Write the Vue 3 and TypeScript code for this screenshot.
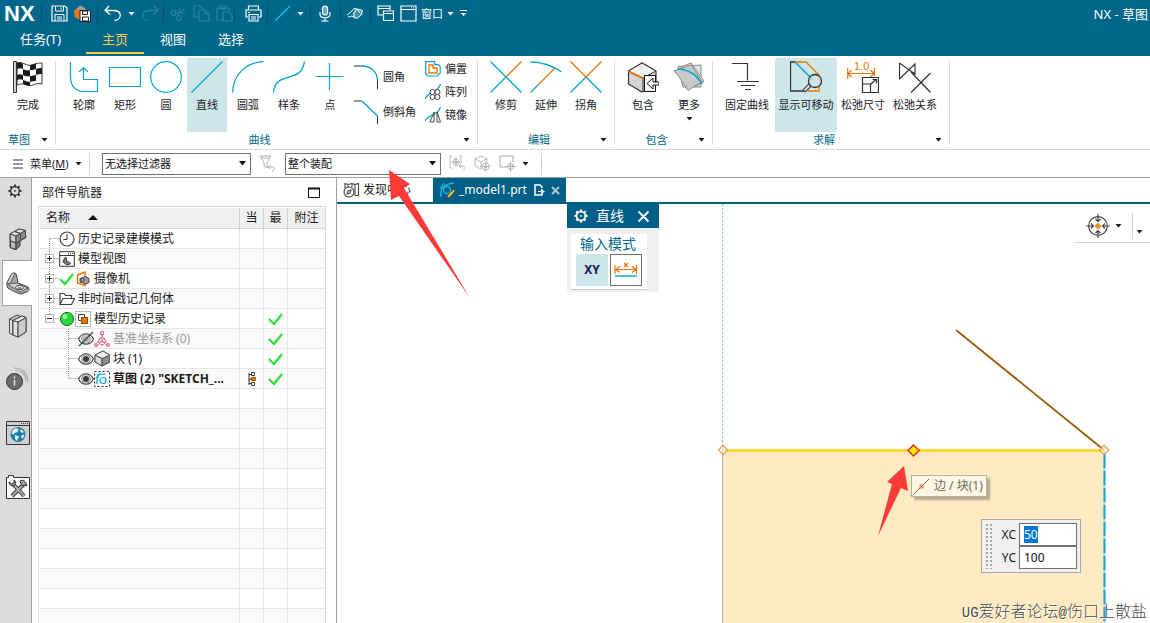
<script setup lang="ts">
import { h, onMounted, ref } from 'vue'

const check = '<path d="M1 8l5 5L14 3" fill="none" stroke="#2be03a" stroke-width="2.2"/>'
const eye = '<path d="M0.500 8C4 1 12 1 15.500 8 12 15 4 15 0.500 8z" fill="#fff" stroke="#444" stroke-width="1.200"/><circle cx="8" cy="8" r="4.200" fill="none" stroke="#555" stroke-width=".8"/><circle cx="8" cy="8" r="3" fill="#3a3a3a"/>'
const cube = (s: string) => `<path d="M1 5l8-4 7 4v7l-8 4-7-4z" fill="#bbb" stroke="${s}"/><path d="M1 5l7 3.500V16l-7-4z" fill="#d8d8d8" stroke="${s}"/><path d="M8 8.500L16 5v7l-8 4z" fill="#8c8c8c" stroke="${s}"/><path d="M1 5l8-4 7 4-8 3.500z" fill="#f2f2f2" stroke="${s}"/>`
const gear = (s: string, w: number) => `<g fill="none" stroke="${s}" stroke-width="${w}"><circle cx="8" cy="8" r="5"/><path stroke-width="${w + 0.6}" d="M8 .5v2.500M8 13v2.500M.5 8H3M13 8h2.500M2.700 2.700l1.700 1.700M11.600 11.600l1.700 1.700M2.700 13.300l1.700-1.700M11.600 4.400l1.700-1.700"/></g><circle cx="8" cy="8" r="1" fill="${s}"/>`
const dots = 'stroke="#8c8c8c" stroke-dasharray="1 1" fill="none"'
const box = '<rect x="5.500" y="5.500" width="8" height="8" fill="#fff" stroke="#b4b4b4"/><path d="M7 9.500h5" stroke="#222"/>'

const art: Record<string, [number, number, string]> = {
  caret: [7, 4, '<path d="M.5 0h6L3.500 3.500z" fill="currentColor"/>'],
  bigCaret: [9, 5, '<path d="M1 0h7L4.500 4.500z" fill="#111"/>'],
  sortUp: [10, 5, '<path d="M0 5h10L5 0z" fill="#111"/>'],
  save: [17, 17, '<path d="M1 1h13l2 2v13H1z" fill="none" stroke="#fff" stroke-width="1.200"/><path d="M4.500 1v5h8V1M4 16V9.500h9V16M6 12h5M6 14h5M10 2.500v2" fill="none" stroke="#fff"/>'],
  saveAs: [17, 17, '<path d="M0 6l6-5.500 5 2.500 1 4-6 8-5-3z" fill="#a89f9a"/><path d="M0 7l4-3 3 2-1 8-5-2z" fill="#e8731c"/><path d="M6 5.500h9l1.500 1.500v9.500H6z" fill="#fff" stroke="#222"/><path d="M8.500 6v3.500h5V6zM8.500 16v-4h6v4z" fill="#fff" stroke="#222"/>'],
  undo: [18, 17, '<path d="M5 1L1 5.500l5 4M1.500 5.500H9c10 0 9 9 1.500 10" fill="none" stroke="#fff" stroke-width="1.300"/>'],
  redo: [18, 17, '<path d="M13 1l4 4.500-5 4M16.500 5.500H9C-1 5.500 0 14.500 7.500 15.500" fill="none" stroke="#2b83a3" stroke-width="1.300"/>'],
  cut: [17, 17, '<g fill="none" stroke="#2b83a3" stroke-width="1.200"><circle cx="3.500" cy="8" r="2.500"/><circle cx="9" cy="13" r="2.500"/><path d="M5.500 8h10M8 11l2-9M9.500 8L14 4"/></g>'],
  copy: [17, 17, '<g fill="none" stroke="#2b83a3" stroke-width="1.200"><path d="M5 12H1V1h6l3 3v1"/><path d="M6 5h6l4 4v7H6zM12 5v4h4"/></g>'],
  paste: [17, 17, '<g fill="none" stroke="#2b83a3" stroke-width="1.200"><path d="M7 15H1V3h12v3M4 4V1h6v3z"/><path d="M7 7h6l3 3v6H7z"/></g>'],
  print: [17, 17, '<g fill="none" stroke="#fff" stroke-width="1.200"><path d="M3.500 5V1h10v4M3 12H1V5h15v7h-2"/><path d="M4 9.500h9V16H4zM6 12h5M6 14h5M3 7.500h2"/></g>'],
  pen: [17, 17, '<path d="M1 16L16 1" stroke="#19c5f5" stroke-width="1.300"/>'],
  mic: [12, 17, '<g fill="none" stroke="#fff" stroke-width="1.200"><rect x="3.500" y="1" width="5" height="9" rx="2.500" fill="#6fa8bf"/><path d="M1 7v2c0 5 10 5 10 0V7M6 13v3M2.500 16h7"/></g>'],
  touch: [17, 17, '<path d="M5 9l2-4 3-1.500 5 1.500 1 4-5 4H8z" fill="#cfe2ea" fill-opacity=".3"/><g fill="none" stroke="#fff"><path d="M0 10l4-3 3-3.500 3 .5M1 12l4-1 3 2M7 8l3-4 5.500 1.500L14 10l-4 3.500-3-1.500zM10 4l3 4"/></g>'],
  windows: [17, 17, '<g fill="none" stroke="#fff" stroke-width="1.200"><path d="M6 10H1V1h12v4M1 3.500h12"/><path d="M6.500 6h10v9.500h-10zM6.500 8.500h10"/></g>'],
  window: [17, 17, '<path d="M1 1h15v15H1zM1 4.500h15" fill="none" stroke="#fff" stroke-width="1.200"/><path d="M11 2.800h4" stroke="#fff" stroke-dasharray="1 1"/>'],
  overflow: [7, 7, '<path d="M0 .5h7" stroke="#fff"/><path d="M.5 3h6L3.500 6z" fill="#fff"/>'],
  flag: [32, 32, '<path d="M5 2c7-2 9 4 15 2s8-2 10-2v21c-8-2-8 3-14 1-5-2-7-1-11 0z" fill="#fff" stroke="#333"/><path d="M5 2c3-1 5 0 6 1v5c-2-1-4-1-6 0zM18 4c2 0 5-1 6-2v6c-2 1-4 1-6 1zM11 8c2 1 5 2 7 1v6c-3 1-5 0-7-1zM24 8c2-1 4-1 6-1v6c-2 0-4 0-6 1zM5 14c2-1 4-1 6 0v5c-2-1-4-1-6 0zM18 15c3 0 4-1 6-1v6c-2 0-4 0-6 1zM11 19c3 1 5 2 7 2v4c-3 0-5-1-7-2z" fill="#1c1c1c"/><path d="M1.500.5h3v31h-3z" fill="#ccc" stroke="#333"/>'],
  profile: [32, 32, '<path d="M2.500 1v14c0 11 5 15.500 14 15.500h13v-12H15.500V7M11 11l4.500-4.500L20 11" fill="none" stroke="#00a5cf" stroke-width="1.200"/>'],
  rect: [32, 32, '<path d="M.5 6.500h31v19H.5z" fill="none" stroke="#00a5cf" stroke-width="1.200"/>'],
  circle: [32, 32, '<circle cx="16" cy="16" r="15.300" fill="none" stroke="#00a5cf" stroke-width="1.200"/>'],
  line: [32, 32, '<path d="M.5 31.500l31-31" stroke="#00a5cf" stroke-width="1.200"/>'],
  arc: [32, 32, '<path d="M.7 31.500C1 14 14 1 31.500 .7" fill="none" stroke="#00a5cf" stroke-width="1.300"/>'],
  spline: [32, 32, '<path d="M.5 31.500C2 9 28 24 31.500.5" fill="none" stroke="#00a5cf" stroke-width="1.300"/>'],
  point: [32, 32, '<path d="M2 15.500h27M15.500 2v27" stroke="#00a5cf" stroke-width="1.200"/>'],
  fillet: [25, 25, '<path d="M0 1h8M23.500 16v8" stroke="#333" fill="none"/><path d="M8 1c9 0 15.500 6 15.500 15" fill="none" stroke="#00a5cf" stroke-width="1.300"/>'],
  chamfer: [25, 25, '<path d="M0 1h8M23.500 16v8" stroke="#333" fill="none"/><path d="M8 1l15.500 15" stroke="#00a5cf" stroke-width="1.300"/>'],
  offset: [16, 16, '<path d="M.7.7h9v3h3.500l2 2V12l-3 3H3L.7 12.500z" fill="none" stroke="#00a5cf" stroke-width="1.200"/><path d="M4 4h4v3h4v5H4z" fill="#fff" stroke="#ea7600" stroke-width="1.300"/>'],
  pattern: [16, 16, '<path d="M0 15C3 7 13 9 15.500 0" fill="none" stroke="#00a5cf" stroke-width="1.200"/><g fill="#fff" stroke="#444"><circle cx="7.500" cy="8" r="2.500"/><circle cx="12.500" cy="8" r="2.500"/><circle cx="7.500" cy="13" r="2.500"/><circle cx="12.500" cy="13" r="2.500"/></g>'],
  mirror: [16, 16, '<path d="M0 14C3 7 13 9 15.500 0" fill="none" stroke="#00a5cf" stroke-width="1.200"/><path d="M9 5v10H5zM12 5l3.500 10H12z" fill="#fff" stroke="#444"/>'],
  trim: [32, 32, '<path d="M.5.5l31 31M.5 31.500L16 16" stroke="#00a5cf" stroke-width="1.300"/><path d="M16 16L31.500.5" stroke="#ea7600" stroke-width="1.300"/>'],
  extend: [32, 32, '<path d="M.5 1C13 1 23 5 31.500 11M.5 31.500L8 24" fill="none" stroke="#00a5cf" stroke-width="1.300"/><path d="M8 24L25 7" stroke="#ea7600" stroke-width="1.300"/>'],
  corner: [32, 32, '<path d="M16 16L.5 31.500M16 16l15.500 15.500" stroke="#00a5cf" stroke-width="1.300"/><path d="M.5.5L16 16 31.500.5" fill="none" stroke="#ea7600" stroke-width="1.300"/>'],
  include: [32, 32, '<path d="M1.500 10L15 2l14 8v13L15 31 1.500 23z" fill="#d4d4d4" stroke="#333" stroke-width="1.200"/><path d="M1.500 10L16 17l13-7L15 2z" fill="#f0f0f0" stroke="#333"/><path d="M16 17v14" stroke="#333"/><path d="M1.500 10.500L16 17.500" stroke="#ea7600" stroke-width="1.500"/><path d="M17.500 14.500h11v16h-11z" fill="#fff" stroke="#111"/><path d="M32 21v3h-6v4l-6-5.500 6-5.500v4z" fill="#fff" stroke="#111"/>'],
  more: [32, 32, '<path d="M5 5.500L28 4v22H10z" fill="#e2e2e2" stroke="#888"/><path d="M8 6l10-4 13 18-9 6z" fill="#ddd" stroke="#888"/><path d="M1 9.500C8 9 12 5 18 4l12 18c-6 0-10 5-15 7.500C10 22 6 15 1 9.500z" fill="#cacaca" stroke="#888"/><path d="M4.500 8C14 8 24 13 28.500 23" fill="none" stroke="#00a5cf" stroke-width="1.600"/>'],
  fixed: [32, 32, '<path d="M1 2.500h15.500v17M6 20.500h22M10 24.500h14M14 28.500h6" fill="none" stroke="#333" stroke-width="1.200"/>'],
  movable: [32, 32, '<path d="M5 1H.5v29H16M1 1h4" fill="none" stroke="#333" stroke-width="1.300"/><path d="M5 1l18 18" stroke="#00a5cf" stroke-width="1.500"/><path d="M5 1h11l13 13v16H18" fill="none" stroke="#ea7600" stroke-width="1.300"/><path d="M20 24l-6 6" stroke="#333" stroke-width="4"/><path d="M20 24l-5.500 5.500" stroke="#ddd" stroke-width="2"/><circle cx="25" cy="20" r="6.500" fill="#cde6ea" fill-opacity=".8" stroke="#333" stroke-width="1.300"/>'],
  relaxDim: [32, 32, '<path d="M.7 7v11M27.500 7v8M1 12.500h26M4.500 9L1 12.500 4.500 16M23.500 9l3.500 3.500-3.500 3.500" fill="none" stroke="#ea7600" stroke-width="1.200"/><text x="7" y="8.500" font-size="11" font-family="Liberation Sans, sans-serif" fill="#ea7600">1.0</text><path d="M15.500 16.500h16v15h-16zM15.500 23h8v8.500M24 23l5-4.500M25.500 18.500h4v4" fill="#fff" stroke="#333" stroke-width="1.200"/>'],
  relaxRel: [32, 32, '<path d="M.5 2v16L16 3v10L.5 2M12 11l19.500 20.500M12 31.500L31.500 12" fill="none" stroke="#333" stroke-width="1.200"/>'],
  burger: [12, 10, '<path d="M1 1h10M1 5h10M1 9h10" stroke="#333"/>'],
  filter: [17, 17, '<path d="M1 1h11L8 7v6l-3-2V7zM2 3h9" fill="none" stroke="#b0b0b0"/><path d="M11 10l-2 2 2 2M9.500 12h4c3 0 2 4-.5 4" fill="none" stroke="#b0b0b0"/>'],
  pickA: [17, 17, '<g fill="none" stroke="#b8b8b8"><path d="M3 1H1v12h2M10 1h2v7"/><circle cx="7" cy="7" r="3"/><path d="M7 2v10M2 7h10M12 9l-2 2 2 2M10.500 11h3c3 0 2 4 0 4.500"/></g><circle cx="7" cy="7" r="1.500" fill="#b0b0b0"/>'],
  pickB: [17, 17, '<g fill="none" stroke="#b8b8b8"><path d="M1 4l6-3 6 3v4M1 4v7l6 3V7M1 4l6 3 6-3"/><circle cx="11.500" cy="11.500" r="3.500"/><path d="M11.500 6.500v10M6.500 11.500h10"/></g><circle cx="11.500" cy="11.500" r="1.500" fill="#b0b0b0"/>'],
  pickC: [17, 17, '<g fill="none" stroke="#aaa"><path d="M7 12H1V1h13v6"/><circle cx="11.500" cy="11.500" r="3"/><path d="M11.500 6.500v10M6.500 11.500h10"/></g>'],
  gearDark: [14, 14, `<g transform="scale(.87)">${gear('#222', 1.4)}</g>`],
  gearLight: [14, 14, `<g transform="scale(.87)">${gear('#fff', 2)}</g>`],
  part: [20, 24, '<g stroke="#444" stroke-linejoin="round"><path d="M2 7l9-5 6 1.500 1 7-7 4v4l-4 4-5-2z" fill="#999"/><path d="M2 7l4.500-2.500 6 1.800L8 9zM6.500 4.500L11 2l6.500 1.500-5 3z" fill="#e2e2e2"/><path d="M2 7l6 2v7l-5.500-2z" fill="#ccc"/><path d="M2.500 14L8 16v6.500l-5.500-2z" fill="#bbb"/><path d="M8 9l4.500-2.500V14L8 16zM12.500 6.500l5-3V10l-5 3.500z" fill="#8a8a8a"/><path d="M8 16l4-2v5l-4 3.500z" fill="#777"/></g>'],
  bracket: [24, 23, '<path d="M1 11L5 3c2-3 5-2 5.500 0l1.500 8 10 4c2 1 1 4-1 5l-6 2c-2 0-13-5-14-7z" fill="#a5a5a5" stroke="#444"/><path d="M1 11l4-8c1-2 3-2.500 4-1.500L4.500 11l-3 1z" fill="#d5d5d5" stroke="#555"/><path d="M1.500 12l9.500-1 11 5-8 4z" fill="#d0d0d0" stroke="#666"/><ellipse cx="13.500" cy="15.500" rx="4" ry="2.200" fill="#eee" stroke="#444"/><ellipse cx="13.500" cy="16" rx="2" ry="1" fill="#777"/>'],
  books: [20, 24, '<g stroke="#444" stroke-linejoin="round"><path d="M1.500 5L9 1l3 1v14l-7 5-3.500-2z" fill="#c8c8c8"/><path d="M1.500 5L5 6.500V21l-3.500-2z" fill="#e2e2e2"/><path d="M5 6.500L14 2l4 1.500V18l-8 5-5-2z" fill="#b8b8b8"/><path d="M5 6.500L10 8v15l-5-2z" fill="#e2e2e2"/><path d="M10 8l8-4.500V18l-8 5z" fill="#ccc"/><path d="M5 6.500L14 2l4 1.500L10 8z" fill="#f0f0f0"/></g>'],
  info: [24, 24, '<path d="M8 1c9 0 14 6 14 14M9 3.500c7 0 10.500 4 11 10.500" fill="none" stroke="#aaa" stroke-width="1.200"/><circle cx="8.500" cy="14.500" r="8" fill="#6c6c6c" stroke="#333"/><path d="M8.500 9.500v2M8.500 13v5.500" stroke="#eee" stroke-width="1.400"/>'],
  globe: [24, 24, '<path d="M.5.500h23v23H.5z" fill="#d0d0d0" stroke="#333"/><path d="M.5 4.500h23" stroke="#333"/><path d="M15 2.500h7" stroke="#333" stroke-dasharray="1 1"/><circle cx="12" cy="13.500" r="7.500" fill="#1d7fa5"/><path d="M6.500 9.500l3-2.500 3 1-1 3-3 1-1 2-2-2zM15 8l3 3-2 1-2-2zM9 14l4 1.500-2 4.500-2-2zM16 14l2.500-.5-1.500 4-2-1z" fill="#e8f2f5"/>'],
  tools: [24, 24, '<path d="M.5 23.500V2.500h2v-2h5v2h16v21z" fill="#fff" stroke="#333"/><path d="M7 9l11 12M18 9L6 21" stroke="#333" stroke-width="4"/><path d="M7 9l11 12M18 9L6 21" stroke="#aaa" stroke-width="2"/><path d="M3 7c0 3 3 5 6 3 1-2 1-4-1-5v3L5.500 9zM14 6c3-2 6 0 7 5l-2-1-2 1-2-2z" fill="#999" stroke="#333"/>'],
  maximize: [12, 12, '<path d="M.5 1.500h11v9H.5z" fill="none" stroke="#111"/><path d="M0 1.500h12" stroke="#111" stroke-width="2"/>'],
  check: [16, 16, check],
  clock: [16, 16, '<circle cx="8" cy="8" r="7" fill="#fff" stroke="#444" stroke-width="1.200"/><path d="M8 3v5.500H4.500" fill="none" stroke="#333"/>'],
  viewWin: [16, 16, '<path d="M.7.7h14.600v14.600H.7zM1 4.500h14" fill="#fff" stroke="#333"/><path d="M9 2.600h5" stroke="#333" stroke-dasharray="1 1"/><path d="M4 11l1.500-4c1-1 2-1 2 1v2l4 2-1 1.500H7z" fill="#777" stroke="#444"/>'],
  camera: [16, 16, '<path d="M2.500 4L10 1v13.500L2.500 12z" fill="#fff" stroke="#ea7600" stroke-width="1.400"/><path d="M5 7.500l5.500-2 3.500 2v4l-3 1.500-6-2z" fill="#999" stroke="#444"/><circle cx="7.500" cy="9" r="1.500" fill="#ccc" stroke="#333"/>'],
  folder: [16, 16, '<path d="M1 13.500v-11h4l1.500 2h6v3M1 13.500l3-6h11.500l-3 6z" fill="#fff" stroke="#444" stroke-width="1.200"/>'],
  ball: [16, 16, '<circle cx="8" cy="8" r="6.600" fill="#24d636" stroke="#15751e"/><circle cx="6" cy="5.500" r="2.500" fill="#9bf5a3"/>'],
  history: [16, 16, '<path d="M.5 .5h15v15H.5z" fill="#fff" stroke="#999" stroke-dasharray="2 1"/><path d="M3.500 3.500h6v6h-6z" fill="#fff" stroke="#444"/><path d="M6.500 6.500h6v6h-6z" fill="#ea7600" stroke="#8a4500"/>'],
  eye: [16, 16, eye],
  eyeOff: [16, 16, eye.replace('#3a3a3a', '#aaa') + '<path d="M1 15L15 1" stroke="#444" stroke-width="1.300"/>'],
  csys: [16, 16, '<g fill="none" stroke="#d4688c" stroke-width="1.200"><path d="M8 3v7M8 10l-5 4M8 10l5 4M6 7l-2 4 4 3 4-3-2-4z"/><circle cx="8" cy="2.200" r="1.500"/><circle cx="2" cy="14" r="1.300"/><circle cx="14" cy="14" r="1.300"/></g>'],
  block: [16, 17, cube('#555')],
  sketch: [16, 16, '<path d="M.5.500h15v15H.5z" fill="#fff" stroke="#222" stroke-dasharray="2 2"/><path d="M3 13V6c1-3 4-3 9-3M4 3v4" fill="none" stroke="#00a5cf" stroke-width="1.200"/><circle cx="9" cy="9.500" r="3" fill="none" stroke="#00a5cf" stroke-width="1.200"/>'],
  struct: [8, 14, '<path d="M1 1v12M1 2.500h3M1 11.500h3M1 7h3" stroke="#333"/><path d="M3.500.5h3v3h-3zM3.500 10.500h3v3h-3z" fill="#fff" stroke="#333"/><path d="M3.500 5.500h4v3h-4z" fill="#ea7600" stroke="#b35900"/>'],
  discover: [17, 16, '<g fill="none" stroke="#444" stroke-width="1.100"><path d="M2 6V1.500l3 1 4-1 3 1v11M12 2.500l3.500-1v12H12M5 2.500V5M9 1.500v3.500"/><circle cx="6" cy="10" r="5"/><path d="M4 12l1-3 3-1-1 3z"/></g>'],
  sketchTab: [17, 17, '<g fill="none" stroke="#16b8e8" stroke-width="1.300"><path d="M2 15C1 6 5 2 15 1M5 1L1 7"/><circle cx="8" cy="8" r="3.500"/></g><path d="M15 7L9 13l-1 3 3-1 5-6z" fill="#f6c944" stroke="#7a3f10" stroke-width=".8"/>'],
  docEdit: [11, 12, '<path d="M8 4V3L6 1H1v10h7V9" fill="none" stroke="#fff" stroke-width="1.500"/><path d="M4 7.500h4" stroke="#fff"/><path d="M7 4.500l4 3-4 3z" fill="#fff"/>'],
  closeTab: [9, 9, '<path d="M1 1l7 7M8 1L1 8" stroke="#a9c8d5" stroke-width="2"/>'],
  closeDialog: [13, 13, '<path d="M1.500 1.500l10 10M11.500 1.500l-10 10" stroke="#fff" stroke-width="1.800"/>'],
  dimension: [24, 16, '<path d="M1 3v9M22.500 3v9M2 7.500h20M6 4.500l-4 3 4 3M18 4.500l4 3-4 3M10 1l4 4M14 1l-4 4" fill="none" stroke="#ea7600" stroke-width="1.200"/><path d="M1 14h22" stroke="#00a5cf" stroke-width="1.400"/>'],
  target: [24, 24, '<circle cx="12" cy="12" r="9.300" fill="none" stroke="#444" stroke-width="1.200"/><path d="M12 0v7M12 17v7M0 12h7M17 12h7M9.500 5L12 7.500 14.500 5M9.500 19l2.500-2.500 2.500 2.500M5 9.500L7.500 12 5 14.500M19 9.500L16.500 12l2.500 2.500" fill="none" stroke="#444" stroke-width="1.200"/><path d="M12 8.500l3.500 3.500-3.500 3.500L8.500 12z" fill="#f08a1c"/>'],
  midpoint: [17, 17, '<path d="M1 16L16 1" stroke="#666"/><circle cx="8.500" cy="8.500" r="2.300" fill="#e89055"/>'],
  gFirst: [19, 19, `<path d="M9.500 10v9M9.500 9.500h9" ${dots}/>`],
  gPlus: [19, 19, `<path d="M9.500 0v19M13.500 9.500h5" ${dots}/>${box}<path d="M9.500 7v5" stroke="#222"/>`],
  gMinus: [19, 19, `<path d="M9.500 0v9M13.500 9.500h5" ${dots}/>${box}`],
  gChild: [38, 19, `<path d="M28.500 0v19M28.500 9.500h9" ${dots}/>`],
  gLast: [38, 19, `<path d="M28.500 0v10M28.500 9.500h9" ${dots}/>`],
}

const Icon = (props: { name: string }) => {
  const [width, height, innerHTML] = art[props.name]
  return h('svg', { width, height, viewBox: `0 0 ${width} ${height}`, innerHTML, 'aria-hidden': 'true' })
}
Icon.props = ['name']

interface Tool { icon: string; label: string; on?: boolean; wide?: boolean; menu?: boolean }
interface Group { id: string; title: string; tools: Tool[] }

const groups: Group[] = [
  { id: 'g-sketch', title: '草图', tools: [{ icon: 'flag', label: '完成' }] },
  {
    id: 'g-curve', title: '曲线', tools: [
      { icon: 'profile', label: '轮廓' }, { icon: 'rect', label: '矩形' }, { icon: 'circle', label: '圆' },
      { icon: 'line', label: '直线', on: true }, { icon: 'arc', label: '圆弧' },
      { icon: 'spline', label: '样条' }, { icon: 'point', label: '点' },
    ],
  },
  { id: 'g-edit', title: '编辑', tools: [{ icon: 'trim', label: '修剪' }, { icon: 'extend', label: '延伸' }, { icon: 'corner', label: '拐角' }] },
  { id: 'g-include', title: '包含', tools: [{ icon: 'include', label: '包含' }, { icon: 'more', label: '更多', menu: true }] },
  {
    id: 'g-solve', title: '求解', tools: [
      { icon: 'fixed', label: '固定曲线', wide: true }, { icon: 'movable', label: '显示可移动', wide: true, on: true },
      { icon: 'relaxDim', label: '松弛尺寸', wide: true }, { icon: 'relaxRel', label: '松弛关系', wide: true },
    ],
  },
]
const corners: Tool[] = [{ icon: 'fillet', label: '圆角' }, { icon: 'chamfer', label: '倒斜角' }]
const copies: Tool[] = [{ icon: 'offset', label: '偏置' }, { icon: 'pattern', label: '阵列' }, { icon: 'mirror', label: '镜像' }]

const quick: Tool[][] = [
  [{ icon: 'save', label: '保存' }, { icon: 'saveAs', label: '另存为' }],
  [{ icon: 'undo', label: '撤消', menu: true }, { icon: 'redo', label: '重做' }],
  [{ icon: 'cut', label: '剪切' }, { icon: 'copy', label: '复制' }, { icon: 'paste', label: '粘贴' }],
  [{ icon: 'print', label: '打印' }],
  [{ icon: 'pen', label: '重复命令', menu: true }],
  [{ icon: 'mic', label: '语音' }],
  [{ icon: 'touch', label: '触控' }],
]
const tabs = ['主页', '视图', '选择']
const rail = ['part', 'bracket', 'books', 'info', 'globe', 'tools']
const railNames = ['装配导航器', '部件导航器', '重用库', '信息', '浏览器', '工具']

interface Row { icons: string[]; text: string; kind?: string; current?: boolean; latest?: boolean }
const rows: Row[] = [
  { icons: ['gFirst', 'clock'], text: '历史记录建模模式' },
  { icons: ['gPlus', 'viewWin'], text: '模型视图' },
  { icons: ['gPlus', 'check', 'camera'], text: '摄像机' },
  { icons: ['gPlus', 'folder'], text: '非时间戳记几何体' },
  { icons: ['gMinus', 'ball', 'history'], text: '模型历史记录', latest: true },
  { icons: ['gChild', 'eyeOff', 'csys'], text: '基准坐标系 (0)', kind: 'dim', latest: true },
  { icons: ['gChild', 'eye', 'block'], text: '块 (1)', latest: true },
  { icons: ['gLast', 'eye', 'sketch'], text: '草图 (2) "SKETCH_...', kind: 'strong', current: true, latest: true },
  ...Array.from({ length: 14 }, () => ({ icons: [], text: '' })),
]

const xc = ref('50')
const yc = ref('100')
const xInput = ref<HTMLInputElement | null>(null)
onMounted(() => {
  xInput.value?.focus({ preventScroll: true })
  xInput.value?.select()
})
</script>

<template>
  <div class="app">
    <header class="title">
      <div class="quick">
        <span class="logo">NX</span>
        <div v-for="(set, i) in quick" :key="i" class="set">
          <button v-for="t in set" :key="t.icon" class="plain" :aria-label="t.label">
            <Icon :name="t.icon" /><Icon v-if="t.menu" name="caret" class="after" />
          </button>
        </div>
        <div class="set">
          <button class="plain" aria-label="切换窗口"><Icon name="windows" /></button>
          <button class="plain win"><Icon name="window" />窗口<Icon name="caret" /></button>
          <button class="plain" aria-label="更多命令"><Icon name="overflow" /></button>
        </div>
        <span class="caption">NX - 草图</span>
      </div>
      <nav class="tabs">
        <button class="tab file">任务(T)</button>
        <button v-for="(t, i) in tabs" :key="t" class="tab" :class="{ active: i === 0 }">{{ t }}</button>
      </nav>
    </header>

    <section class="ribbon">
      <div v-for="g in groups" :key="g.id" class="group" :class="g.id">
        <div class="tools">
          <button v-for="t in g.tools" :key="t.label" class="tool" :class="{ on: t.on, wide: t.wide }">
            <Icon :name="t.icon" /><span>{{ t.label }}</span><Icon v-if="t.menu" name="caret" />
          </button>
          <template v-if="g.id === 'g-curve'">
            <div class="stack corners">
              <button v-for="t in corners" :key="t.label" class="small"><Icon :name="t.icon" />{{ t.label }}</button>
            </div>
            <div class="stack">
              <button v-for="t in copies" :key="t.label" class="small"><Icon :name="t.icon" />{{ t.label }}</button>
            </div>
          </template>
        </div>
        <button class="footer"><span>{{ g.title }}</span><Icon name="caret" /></button>
      </div>
    </section>

    <section class="selection">
      <button class="plain menu"><Icon name="burger" /><span>菜单(<u>M</u>)</span><Icon name="caret" /></button>
      <label class="combo filter-by">
        <select aria-label="选择过滤器"><option>无选择过滤器</option></select><Icon name="bigCaret" />
      </label>
      <button class="plain" aria-label="重置过滤器"><Icon name="filter" /></button>
      <label class="combo scope">
        <select aria-label="选择范围"><option>整个装配</option></select><Icon name="bigCaret" />
      </label>
      <div class="picks">
        <button class="plain" aria-label="重置选择"><Icon name="pickA" /></button>
        <button class="plain" aria-label="选择体"><Icon name="pickB" /></button>
        <button class="plain" aria-label="矩形选择"><Icon name="pickC" /><Icon name="caret" class="after" /></button>
      </div>
    </section>

    <main class="work">
      <aside class="rail">
        <button class="cog" aria-label="资源条选项"><Icon name="gearDark" /></button>
        <button v-for="(r, i) in rail" :key="r" :class="['r-' + r, { current: i === 1 }]" :aria-label="railNames[i]"><Icon :name="r" /></button>
      </aside>

      <section class="navigator">
        <div class="nav-head"><h2>部件导航器</h2><button class="plain" aria-label="最大化"><Icon name="maximize" /></button></div>
        <div class="tree">
          <table>
            <colgroup><col><col class="c-mark"><col class="c-mark"><col class="c-note"></colgroup>
            <thead>
              <tr><th class="name">名称<Icon name="sortUp" /></th><th>当</th><th>最</th><th>附注</th></tr>
            </thead>
            <tbody>
              <tr v-for="(r, i) in rows" :key="i">
                <td><div class="cell" :class="r.kind"><Icon v-for="n in r.icons" :key="n" :name="n" /><span>{{ r.text }}</span></div></td>
                <td><div class="mark"><Icon v-if="r.current" name="struct" /></div></td>
                <td><div class="mark"><Icon v-if="r.latest" name="check" /></div></td>
                <td></td>
              </tr>
            </tbody>
          </table>
        </div>
      </section>

      <section class="document">
        <div class="doc-tabs">
          <button class="doc"><Icon name="discover" />发现中心</button>
          <button class="doc open"><Icon name="sketchTab" />_model1.prt<Icon name="docEdit" class="doc-edit" /><Icon name="closeTab" /></button>
        </div>
        <div class="canvas">
          <svg class="scene" aria-hidden="true">
            <rect x="386" y="246" width="381" height="400" fill="#ffeac2" />
            <path d="M385.500 0v246" stroke="#8cc08c" stroke-dasharray="2 2" />
            <path d="M385.500 246v400" stroke="#a9b59c" />
            <path d="M386 246.500h381" stroke="#ffd633" stroke-width="3" />
            <path d="M767.500 246v400" stroke="#d0c8b4" stroke-width="2" />
            <path d="M767.500 250v400" stroke="#10a8f0" stroke-width="2" stroke-dasharray="14 3" />
            <path d="M619 126l148 120" stroke="#9c5c08" stroke-width="1.800" />
            <path d="M386 241.500l4.500 4.500-4.500 4.500-4.500-4.500zM767 241.500l4.500 4.500-4.500 4.500-4.500-4.500z" fill="#fff" fill-opacity=".6" stroke="#eda04c" stroke-width="1.300" />
            <path d="M576.500 241l5.500 5.500-5.500 5.500-5.500-5.500z" fill="#ffee00" stroke="#e8301c" stroke-width="1.500" />
          </svg>

          <div class="dialog">
            <div class="dialog-head">
              <button class="plain" aria-label="对话框选项"><Icon name="gearLight" /></button>
              <h3>直线</h3>
              <button class="plain" aria-label="关闭"><Icon name="closeDialog" /></button>
            </div>
            <div class="modes">
              <h4>输入模式</h4>
              <div class="mode-row">
                <button class="mode picked">XY</button>
                <button class="mode" aria-label="参数模式"><Icon name="dimension" /></button>
              </div>
            </div>
          </div>

          <div class="view-bar">
            <button class="plain" aria-label="定向视图"><Icon name="target" /><Icon name="caret" class="after" /></button>
            <button class="plain tail" aria-label="更多视图"><Icon name="caret" /></button>
          </div>

          <div class="hint"><Icon name="midpoint" />边 / 块(1)</div>

          <div class="coords">
            <span class="grip"></span>
            <div class="fields">
              <label for="xc">XC</label><input id="xc" ref="xInput" v-model="xc" type="text">
              <label for="yc">YC</label><input id="yc" v-model="yc" type="text">
            </div>
          </div>
          <div class="credit"><span>UG</span>爱好者论坛<span>@</span>伤口上散盐</div>
        </div>
      </section>
    </main>

    <svg class="arrows" aria-hidden="true">
      <path d="M389 170l21 14-6 4 66 110-71-102-8 4z" fill="#fb3b38" />
      <path d="M904 466l4 25-7-3-23 48 14-52-5-2z" fill="#fb3b38" />
    </svg>
  </div>
</template>

<style>
html, body { margin: 0; overflow: hidden; }
</style>

<style scoped>
.app {
  position: relative;
  display: flex;
  flex-direction: column;
  height: 100vh;
  overflow: hidden;
  background: #fff;
  color: #1a1a1a;
  font: 12px/16px "Noto Sans", "Noto Sans CJK SC", sans-serif;
}
.app *, .app *::before { box-sizing: border-box; }
button {
  margin: 0;
  padding: 0;
  border: 0;
  background: none;
  color: inherit;
  font: inherit;
  white-space: nowrap;
}
svg { display: block; flex: none; }
h2, h3, h4 { margin: 0; font-weight: 400; }
.plain { display: flex; align-items: center; }
.after { margin-left: 6px; }

.title { flex: none; height: 56px; background: #00668a; color: #fff; }
.quick { display: flex; align-items: center; height: 27px; }
.logo { width: 41px; padding-left: 4px; font: 700 22px/26px "Liberation Sans", sans-serif; }
.set { display: flex; align-items: center; gap: 6px; height: 18px; padding: 0 6px 0 9px; border-left: 1px solid #00506e; }
.set:nth-child(3) { padding: 0 4px 0 6px; }
.set:nth-child(4) { padding: 0 1px 0 6px; }
.set:nth-child(5) { padding: 0 5px 0 10px; }
.set:nth-child(6) { padding: 0 6px; }
.set:nth-child(7) { padding: 0 9px 0 8px; }
.set:nth-child(8) { padding: 0 6px; }
.set:nth-child(9) { padding-left: 6px; }
.win { gap: 4px; font-size: 11px; }
.caption { margin-left: auto; padding-right: 2px; font-size: 13px; white-space: nowrap; }
.tabs { display: flex; height: 27px; }
.tab { padding: 0 16px; font-size: 13px; line-height: 25px; border-bottom: 2px solid transparent; }
.tab.file { margin-right: 9px; padding: 0 16px 0 20px; }
.tab.active { border-color: #ffcd50; color: #ffcd50; }

.ribbon { display: flex; flex: none; height: 94px; border-bottom: 1px solid #d8d8d8; }
.group { position: relative; display: flex; flex-direction: column; padding-top: 2px; font-size: 11px; }
.group::before { content: ""; position: absolute; top: 5px; bottom: 4px; right: 0; width: 1px; background: #d8d8d8; }
.g-sketch { flex: 0 0 56px; }
.g-curve { flex: 0 0 422px; }
.g-edit { flex: 0 0 137px; }
.g-include { flex: 0 0 98px; }
.g-solve { flex: 0 0 237px; }
.tools { display: flex; flex: 1; gap: 1px; padding-left: 8px; }
.g-edit .tools { gap: 0; }
.g-include .tools { gap: 6px; }
.g-solve .tools { gap: 0; padding-left: 8px; }
.tool {
  display: flex;
  flex-direction: column;
  align-items: center;
  width: 40px;
  height: 74px;
  padding-top: 3px;
  line-height: 14px;
}
.tool span { margin: 5px 0; }
.tool.wide { width: 52px; }
.tool.wide.on { width: 62px; margin-left: 2px; }
.tool.on { background: #cde6ea; }
.stack { display: flex; flex-direction: column; gap: 7px; padding-top: 3px; }
.corners { gap: 11px; padding: 7px 8px 0 3px; }
.small { display: flex; align-items: center; gap: 4px; height: 16px; }
.corners .small { height: 24px; }
.footer { display: flex; align-items: center; height: 21px; padding: 0 8px 1px; color: #00668a; line-height: 16px; }
.footer span { flex: 1; text-align: center; }
.footer svg { color: #111; }
.g-sketch .footer span { text-align: left; }
.group:not(.g-sketch) .footer { padding-left: 0; }

.selection { display: flex; align-items: center; flex: none; height: 28px; border-bottom: 1px solid #a0a0a0; font-size: 11px; }
.menu { gap: 6px; height: 20px; width: 90px; padding-left: 12px; border-right: 1px solid #d0d0d0; }
.combo { display: grid; align-items: center; height: 22px; }
.combo > * { grid-area: 1 / 1; }
.combo svg { justify-self: end; margin-right: 4px; pointer-events: none; }
.combo select {
  width: 100%;
  height: 22px;
  padding: 0 2px;
  border: 1px solid #707070;
  border-radius: 0;
  background: #fff;
  color: #111;
  font: inherit;
  appearance: none;
}
.filter-by { width: 149px; margin: 0 8px 0 12px; }
.scope { width: 156px; margin-left: 9px; }
.picks { display: flex; align-items: center; gap: 8px; height: 20px; padding: 0 12px 0 8px; border-right: 1px solid #d0d0d0; }

.work { display: flex; flex: 1; min-height: 0; }
.rail { display: flex; flex-direction: column; flex: 0 0 32px; background: #dcdcdc; border-right: 1px solid #a0a0a0; }
.rail button { display: flex; align-items: center; justify-content: center; flex: none; height: 54px; padding-left: 4px; }
.rail .cog { height: 26px; padding: 0 2px 0 0; }
.rail .r-part { height: 42px; margin-top: 14px; }
.rail .current { height: 46px; margin: 0 -1px 0 2px; padding: 0 0 0 1px; border: 1px solid #a0a0a0; border-right: 0; background: #fff; }
.rail .r-books { height: 40px; margin-bottom: 6px; }

.navigator { display: flex; flex-direction: column; flex: 0 0 305px; padding: 0 10px 0 6px; border-right: 1px solid #a0a0a0; }
.nav-head { display: flex; justify-content: space-between; flex: none; height: 28px; padding: 0 6px 0 4px; }
.nav-head h2 { font-size: 12px; line-height: 29px; }
.nav-head .plain { padding-top: 2px; }
.tree { flex: 1; min-height: 0; overflow: hidden; padding: 1px 0 0 1px; border: 1px solid #d8d8d8; border-bottom: 0; }
table { width: 100%; table-layout: fixed; border-collapse: separate; border-spacing: 0; }
.c-mark { width: 24px; }
.c-note { width: 37px; }
th, td { height: 20px; padding: 0; border: solid #e6e6e6; border-width: 0 1px 1px 0; overflow: hidden; }
th { height: 21px; background: #f0f0f0; border-color: #d0d0d0; font-weight: 400; line-height: 20px; }
td:last-child, th:last-child { border-right: 0; }
.name { text-align: left; padding-left: 6px; }
.name svg { display: inline-block; margin: 0 0 2px 18px; }
tbody tr:nth-child(even) { background: #fafafa; }
.cell { display: flex; align-items: center; height: 19px; white-space: nowrap; }
.cell span { padding-left: 3px; }
.dim { color: #999; }
.strong { font-weight: 700; }
.mark { display: flex; align-items: center; justify-content: center; height: 19px; }

.document { display: flex; flex-direction: column; flex: 1; min-width: 0; }
.doc-tabs { display: flex; flex: none; height: 26px; border-bottom: 2px solid #005f87; }
.doc { display: flex; align-items: center; gap: 3px; width: 96px; padding-left: 6px; }
.doc.open { width: 133px; background: #005f87; color: #fff; }
.doc-edit { margin: 0 3px 0 4px; }
.canvas { position: relative; flex: 1; min-height: 0; overflow: hidden; }
.scene { position: absolute; inset: 0; width: 100%; height: 100%; }

.dialog { position: absolute; top: 0; left: 230px; width: 92px; padding-bottom: 2px; background: #f0f0f0; }
.dialog-head { display: flex; align-items: center; height: 24px; padding: 0 9px 0 7px; background: #005f87; color: #fff; }
.dialog-head h3 { flex: 1; padding-left: 8px; font-size: 14px; line-height: 24px; }
.modes { width: 76px; margin: 6px 0 0 4px; padding: 0 5px 3px; border-bottom: 1px solid #c8c8c8; background: #fff; }
.modes h4 { padding-left: 4px; font-size: 14px; line-height: 20px; color: #00668a; }
.mode-row { display: flex; gap: 2px; }
.mode { display: flex; align-items: center; justify-content: center; width: 32px; height: 32px; border: 1px solid #707070; }
.mode.picked { border-color: #cde6ea; background: #cde6ea; color: #201060; font-weight: 700; }

.view-bar { position: absolute; top: 6px; right: 0; display: flex; align-items: center; width: 76px; height: 33px; padding-left: 12px; border-bottom: 1px solid #d8d8d8; }
.view-bar .after { margin-left: 5px; }
.tail { height: 26px; margin-left: 10px; padding: 12px 0 0 3px; border-left: 1px solid #d0d0d0; }

.hint {
  position: absolute;
  top: 271px;
  left: 574px;
  display: flex;
  align-items: center;
  gap: 4px;
  height: 22px;
  padding: 0 3px 0 1px;
  border: 1px solid #b8b0a0;
  background: #fff6e4;
  box-shadow: 3px 3px 2px #b5a88c;
  color: #6e6a64;
  white-space: nowrap;
}
.coords { position: absolute; top: 315px; left: 644px; display: flex; width: 100px; height: 54px; padding: 3px; border: 1px solid #a8a8a8; background: #f0f0f0; }
.grip { width: 8px; margin-right: 5px; background: radial-gradient(circle, #a8a8a8 1px, transparent 1px) 0 0 / 4px 4px; }
.fields { display: grid; flex: 1; grid-template-columns: 1fr 58px; grid-template-rows: 23px 23px; align-items: center; }
.fields label { padding-right: 3px; text-align: right; }
.fields input { width: 100%; height: 100%; padding: 0 4px; border: 1px solid #707070; border-radius: 0; outline: 0; background: #fff; color: #111; font: inherit; }
.fields input::selection { background: #0078d7; color: #fff; }
.credit {
  position: absolute;
  right: 3px;
  bottom: 0;
  color: #4a4a4a;
  font-family: "Noto Sans CJK SC", sans-serif;
  font-size: 16px;
  line-height: 20px;
  font-weight: 300;
  text-shadow: 1px 1px 0 #fff;
  white-space: nowrap;
}
.credit span { font-family: "Liberation Mono", monospace; font-size: 14px; }
.arrows { position: absolute; inset: 0; width: 100%; height: 100%; pointer-events: none; }
</style>
